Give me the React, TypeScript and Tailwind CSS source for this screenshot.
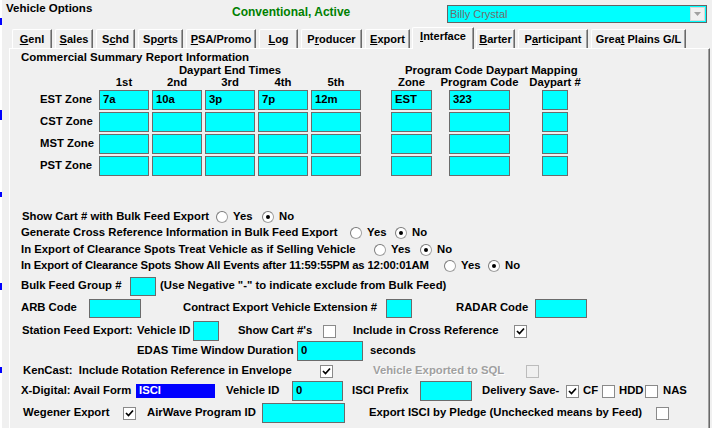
import type { ReactNode } from 'react';

function Box({ className = '', children }: { className?: string; children?: ReactNode }) {
  return (
    <div
      className={`flex shrink-0 items-center border border-[#6b6b6b] bg-[#00ffff] pl-[3px] font-bold text-black ${className}`}
    >
      {children}
    </div>
  );
}

function Radio({ checked = false }: { checked?: boolean }) {
  return (
    <span className="flex h-[12px] w-[12px] shrink-0 items-center justify-center rounded-full border border-[#a0a0a0] border-t-[#7a7a7a] border-l-[#7a7a7a] bg-white">
      {checked && <span className="h-[4px] w-[4px] rounded-full bg-black" />}
    </span>
  );
}

function Check({ checked = false, disabled = false }: { checked?: boolean; disabled?: boolean }) {
  return (
    <span
      className={`flex h-[13px] w-[13px] shrink-0 items-center justify-center border ${
        disabled ? 'border-[#bcbcbc] bg-[#f0f0f0]' : 'border-[#8a8a8a] bg-white'
      }`}
    >
      {checked && (
        <svg width="9" height="9" viewBox="0 0 9 9">
          <polyline points="1,4 3.5,6.5 8,1.5" fill="none" stroke="#000" strokeWidth="1.7" />
        </svg>
      )}
    </span>
  );
}

function Tab({ className = '', children, active = false }: { className?: string; children: ReactNode; active?: boolean }) {
  return (
    <div
      className={`flex shrink-0 items-center justify-center rounded-tl-[2px] border-t border-l border-r border-white border-r-[#696969] shadow-[inset_-1px_0_0_#a0a0a0] text-[11px] ${
        active ? 'relative z-10 -mb-px h-[22px] bg-[#f0f0f0] pb-[4px]' : 'h-[19px]'
      } ${className}`}
    >
      {children}
    </div>
  );
}

const zones = [
  { label: 'EST Zone', times: ['7a', '10a', '3p', '7p', '12m'], zone: 'EST', code: '323' },
  { label: 'CST Zone', times: ['', '', '', '', ''], zone: '', code: '' },
  { label: 'MST Zone', times: ['', '', '', '', ''], zone: '', code: '' },
  { label: 'PST Zone', times: ['', '', '', '', ''], zone: '', code: '' },
];

export default function App() {
  return (
    <div className="relative flex h-[428px] w-[712px] flex-col overflow-hidden bg-[#f0f0f0] font-['Liberation_Sans',Arial,sans-serif] text-[11.3px] font-bold leading-none text-black">
      {/* edge of the parent window */}
      <div className="absolute top-0 left-0 flex h-full w-[2px] flex-col bg-white">
        <div className="mt-[18px] h-[7px] bg-[#0000ff]" />
        <div className="mt-[85px] h-[10px] bg-[#0000ff]" />
        <div className="mt-[72px] h-[5px] bg-[#0000ff]" />
        <div className="mt-[86px] h-[7px] bg-[#0000ff]" />
        <div className="mt-[77px] h-[6px] bg-[#0000ff]" />
      </div>

      {/* header */}
      <div className="flex h-[27px] shrink-0 items-start">
        <span className="mt-[3px] ml-[6px] w-[226px] text-[11.5px]">Vehicle Options</span>
        <span className="mt-[6px] w-[215px] text-[12px] text-[#008000]">Conventional, Active</span>
        <div className="mt-[5px] flex h-[18px] w-[260px] items-center border border-[#646464] bg-[#00ffff]">
          <span className="flex-1 pl-[2px] text-[11px] font-normal text-[#6d6d6d]">Billy Crystal</span>
          <div className="mr-[1px] flex h-[14px] w-[15px] items-center justify-center border border-[#d8d8d8] bg-[#f0f0f0]">
            <svg width="7" height="4" viewBox="0 0 7 4">
              <polygon points="0,0 7,0 3.5,4" fill="#a0a0a0" />
            </svg>
          </div>
        </div>
      </div>

      {/* tabs */}
      <div className="flex h-[21px] shrink-0 items-end">
        <Tab className="ml-[12px] w-[40px]"><span><u>G</u>enl</span></Tab>
        <Tab className="ml-[3px] w-[38px]"><span><u>S</u>ales</span></Tab>
        <Tab className="ml-[3px] w-[39px]"><span>S<u>c</u>hd</span></Tab>
        <Tab className="ml-[3px] w-[45px]"><span>Sp<u>o</u>rts</span></Tab>
        <Tab className="ml-[3px] w-[70px]"><span><u>P</u>SA/Promo</span></Tab>
        <Tab className="ml-[3px] w-[39px]"><span><u>L</u>og</span></Tab>
        <Tab className="ml-[3px] w-[61px]"><span>P<u>r</u>oducer</span></Tab>
        <Tab className="ml-[3px] w-[45px]"><span><u>E</u>xport</span></Tab>
        <Tab active className="ml-[2px] w-[62px]"><span><u>I</u>nterface</span></Tab>
        <Tab className="ml-[2px] w-[39px]"><span><u>B</u>arter</span></Tab>
        <Tab className="ml-[3px] w-[70px]"><span>P<u>a</u>rticipant</span></Tab>
        <Tab className="ml-[3px] w-[95px]"><span>Grea<u>t</u> Plains G/L</span></Tab>
      </div>

      {/* tab page */}
      <div className="ml-[9px] flex w-[701px] flex-1 flex-col border-t border-l border-r border-white border-r-[#696969] shadow-[inset_-1px_0_0_#a0a0a0]">
        <div className="mt-[2px] flex h-[14px] items-center">
          <span className="ml-[11px] text-[11.5px]">Commercial Summary Report Information</span>
        </div>
        <div className="flex h-[11px] items-center whitespace-nowrap">
          <span className="ml-[89px] w-[262px] text-center">Daypart End Times</span>
          <span className="ml-[44px]">Program Code Daypart Mapping</span>
        </div>
        <div className="flex h-[14px] items-center whitespace-nowrap">
          <span className="ml-[89px] flex w-[50px] justify-center">1st</span>
          <span className="ml-[3px] flex w-[50px] justify-center">2nd</span>
          <span className="ml-[3px] flex w-[50px] justify-center">3rd</span>
          <span className="ml-[3px] flex w-[50px] justify-center">4th</span>
          <span className="ml-[3px] flex w-[50px] justify-center">5th</span>
          <span className="ml-[30px] flex w-[41px] justify-center">Zone</span>
          <span className="ml-[17px] flex w-[61px] justify-center">Program Code</span>
          <span className="ml-[32px] flex w-[26px] justify-center">Daypart #</span>
        </div>
        {zones.map((z, i) => (
          <div key={z.label} className={`flex h-[20px] ${i === 0 ? '' : 'mt-[2px]'}`}>
            <span className="ml-[30px] flex w-[59px] items-center">{z.label}</span>
            {z.times.map((t, j) => (
              <Box key={j} className={`h-[20px] w-[50px] ${j === 0 ? '' : 'ml-[3px]'}`}>{t}</Box>
            ))}
            <Box className="ml-[30px] h-[20px] w-[41px]">{z.zone}</Box>
            <Box className="ml-[17px] h-[20px] w-[61px]">{z.code}</Box>
            <Box className="ml-[32px] h-[20px] w-[26px]" />
          </div>
        ))}

        <div className="mt-[33px] flex h-[16px] items-center whitespace-nowrap">
          <span className="ml-[12px] w-[194px]">Show Cart # with Bulk Feed Export</span>
          <Radio />
          <span className="ml-[5px] w-[29px]">Yes</span>
          <Radio checked />
          <span className="ml-[5px]">No</span>
        </div>
        <div className="flex h-[16px] items-center whitespace-nowrap">
          <span className="ml-[11px] w-[329px]">Generate Cross Reference Information in Bulk Feed Export</span>
          <Radio />
          <span className="ml-[5px] w-[28px]">Yes</span>
          <Radio checked />
          <span className="ml-[5px]">No</span>
        </div>
        <div className="mt-[1px] flex h-[16px] items-center whitespace-nowrap">
          <span className="ml-[11px] w-[353px]">In Export of Clearance Spots Treat Vehicle as if Selling Vehicle</span>
          <Radio />
          <span className="ml-[5px] w-[29px]">Yes</span>
          <Radio checked />
          <span className="ml-[5px]">No</span>
        </div>
        <div className="flex h-[16px] items-center whitespace-nowrap">
          <span className="ml-[11px] w-[423px] tracking-[-0.15px]">In Export of Clearance Spots Show All Events after 11:59:55PM as 12:00:01AM</span>
          <Radio />
          <span className="ml-[5px] w-[27px]">Yes</span>
          <Radio checked />
          <span className="ml-[5px]">No</span>
        </div>

        <div className="mt-[2px] flex h-[20px] items-center whitespace-nowrap">
          <span className="ml-[11px] w-[109px]">Bulk Feed Group #</span>
          <Box className="h-[19px] w-[26px]" />
          <span className="ml-[4px]">(Use Negative "-" to indicate exclude from Bulk Feed)</span>
        </div>
        <div className="mt-[2px] flex h-[20px] items-center whitespace-nowrap">
          <span className="ml-[11px] w-[68px]">ARB Code</span>
          <Box className="h-[19px] w-[52px]" />
          <span className="ml-[42px] w-[203px]">Contract Export Vehicle Extension #</span>
          <Box className="h-[19px] w-[26px]" />
          <span className="ml-[44px] w-[79px]">RADAR Code</span>
          <Box className="h-[19px] w-[52px]" />
        </div>
        <div className="mt-[3px] flex h-[20px] items-center whitespace-nowrap">
          <span className="ml-[12px] w-[115px]">Station Feed Export:</span>
          <span className="w-[56px]">Vehicle ID</span>
          <Box className="h-[20px] w-[26px]" />
          <span className="ml-[19px] w-[85px]">Show Cart #'s</span>
          <Check />
          <span className="ml-[17px] w-[161px]">Include in Cross Reference</span>
          <Check checked />
        </div>
        <div className="flex h-[20px] items-center whitespace-nowrap">
          <span className="ml-[127px] w-[160px]">EDAS Time Window Duration</span>
          <Box className="h-[20px] w-[66px]">0</Box>
          <span className="ml-[7px]">seconds</span>
        </div>
        <div className="mt-[2px] flex h-[16px] items-center whitespace-pre">
          <span className="ml-[13px] w-[297px]">KenCast:  Include Rotation Reference in Envelope</span>
          <Check checked />
          <span className="ml-[40px] w-[153px] text-[#a0a0a0] [text-shadow:1px_1px_0_#ffffff]">Vehicle Exported to SQL</span>
          <Check disabled />
        </div>
        <div className="mt-[2px] flex h-[20px] items-center whitespace-nowrap">
          <span className="ml-[11px] w-[115px]">X-Digital: Avail Form</span>
          <div className="flex h-[14px] w-[79px] items-center bg-[#0000ff] pl-[3px] text-white">ISCI</div>
          <span className="ml-[11px] w-[66px]">Vehicle ID</span>
          <Box className="h-[20px] w-[51px]">0</Box>
          <span className="ml-[9px] w-[68px]">ISCI Prefix</span>
          <Box className="h-[20px] w-[52px]" />
          <span className="ml-[10px] w-[84px]">Delivery Save-</span>
          <Check checked />
          <span className="ml-[4px] w-[19px]">CF</span>
          <Check />
          <span className="ml-[4px] w-[26px]">HDD</span>
          <Check />
          <span className="ml-[5px]">NAS</span>
        </div>
        <div className="mt-[2px] flex h-[20px] items-center whitespace-nowrap">
          <span className="ml-[13px] w-[100px]">Wegener Export</span>
          <Check checked />
          <span className="ml-[11px] w-[115px]">AirWave Program ID</span>
          <Box className="h-[20px] w-[83px]" />
          <span className="ml-[24px] w-[287px]">Export ISCI by Pledge (Unchecked means by Feed)</span>
          <Check />
        </div>
      </div>
    </div>
  );
}
